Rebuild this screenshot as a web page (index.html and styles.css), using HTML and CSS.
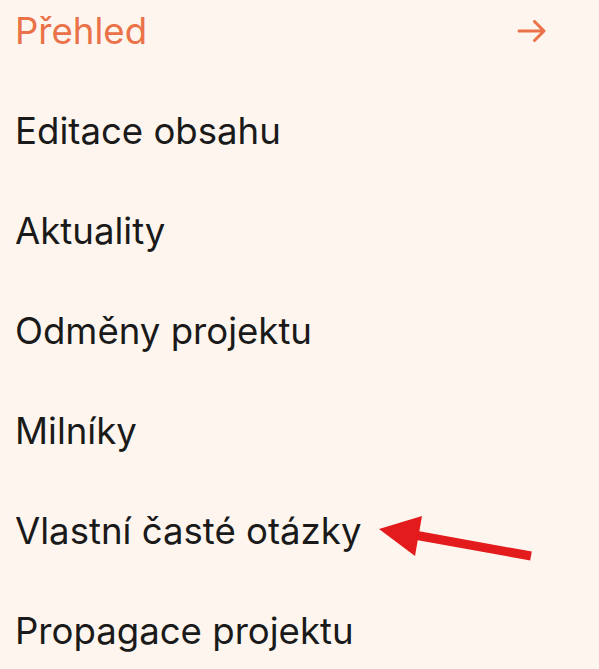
FILE: index.html
```html
<!DOCTYPE html>
<html>
<head>
<meta charset="UTF-8">
<link rel="stylesheet" href="styles.css">
<title>Menu</title>
</head>
<body>
  <nav class="side-menu">
    <a href="#" class="menu-link active">
      <span>Přehled</span>
      <svg class="go-icon" width="30" height="22" viewBox="0 0 30 22">
        <path d="M2 11 H27 M17.5 1.5 L27 11 L17.5 20.5" fill="none" stroke="currentColor" stroke-width="3" stroke-linecap="round" stroke-linejoin="round"/>
      </svg>
    </a>
    <a href="#" class="menu-link">Editace obsahu</a>
    <a href="#" class="menu-link">Aktuality</a>
    <a href="#" class="menu-link">Odměny projektu</a>
    <a href="#" class="menu-link">Milníky</a>
    <a href="#" class="menu-link marked">
      Vlastní časté otázky
      <svg class="pointer" width="160" height="56" viewBox="0 0 160 56">
        <path d="M30 24 L152 46" stroke="#e31b1c" stroke-width="9"/>
        <polygon points="0,19 43,6 36,46" fill="#e31b1c"/>
      </svg>
    </a>
    <a href="#" class="menu-link">Propagace projektu</a>
  </nav>
</body>
</html>
```

FILE: styles.css
```css
body {
  margin: 0;
  background-color: #fef6ee;
  font-family: 'Inter', 'Noto Sans', sans-serif;
}

.side-menu {
  display: flex;
  flex-direction: column;
  padding: 0 52px 0 15px;
}

.menu-link {
  display: flex;
  align-items: center;
  justify-content: space-between;
  height: 62px;
  margin-bottom: 38px;
  color: #1a1a1a;
  text-decoration: none;
  font-size: 36.6px;
  line-height: 62px;
}

.active {
  color: #ea7148;
}

.go-icon {
  color: #ea7148;
}

.marked {
  position: relative;
  justify-content: flex-start;
}

.pointer {
  position: absolute;
  left: 364px;
  top: 10px;
}
```
